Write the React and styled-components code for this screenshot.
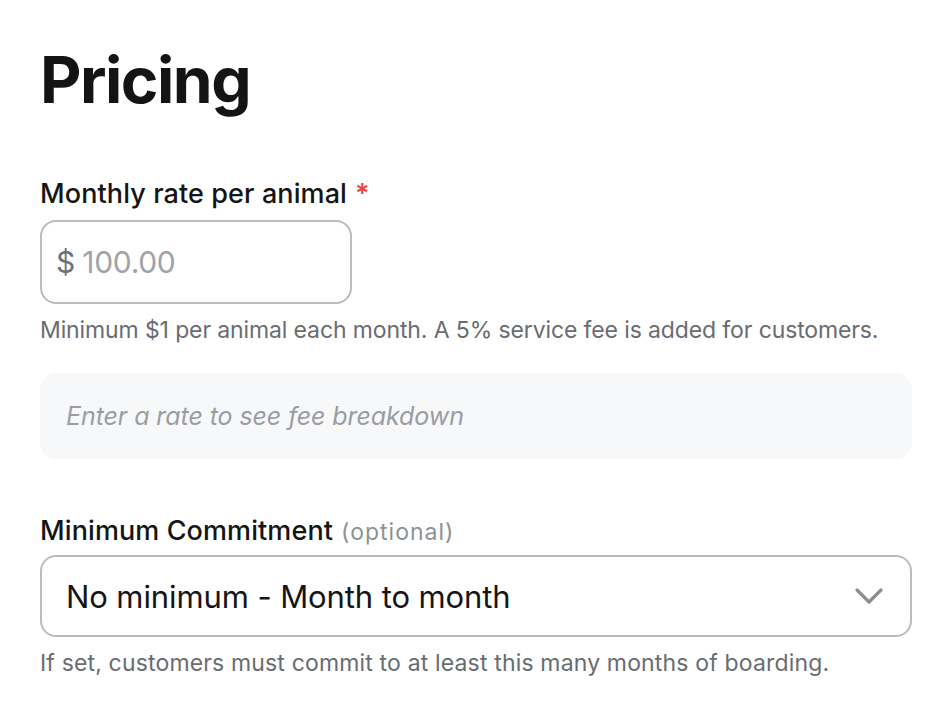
import React from "react";
import styled, { createGlobalStyle } from "styled-components";

const Global = createGlobalStyle`
  html, body { margin: 0; padding: 0; background: #ffffff; }
  body { font-family: Inter, "Noto Sans", sans-serif; color: #151515; }
  * { box-sizing: border-box; }
`;

const Page = styled.div`
  padding: 40px 40px 0 40px;
  display: flex;
  flex-direction: column;
`;

const Title = styled.h1`
  margin: 0;
  font-size: 64px;
  line-height: 80px;
  font-weight: 700;
  letter-spacing: -1.5px;
  color: #141414;
`;

const Field = styled.div`
  display: flex;
  flex-direction: column;
  margin-top: ${(p) => p.$top}px;
`;

const Label = styled.label`
  font-size: 27px;
  line-height: 36px;
  font-weight: 500;
  letter-spacing: 0.1px;
  color: #151515;
  display: flex;
  align-items: baseline;
  gap: 8px;
`;

const Required = styled.span`
  color: #ef4444;
  font-weight: 600;
`;

const Optional = styled.span`
  font-size: 23px;
  color: #8e9195;
  font-weight: 400;
  letter-spacing: 1px;
`;

const InputBox = styled.div`
  margin-top: 8px;
  width: 312px;
  height: 84px;
  border: 2px solid #b9bcc0;
  border-radius: 16px;
  display: flex;
  align-items: center;
  padding: 0 14px;
  font-size: 30px;
  gap: 7px;
`;

const Currency = styled.span`
  color: #6e7175;
`;

const Placeholder = styled.span`
  color: #a0a3a7;
  letter-spacing: -0.3px;
`;

const Help = styled.p`
  margin: 10px 0 0 0;
  font-size: 23px;
  line-height: 32px;
  color: #696c70;
  letter-spacing: ${(p) => p.$spacing ?? -0.12}px;
`;

const FeeBox = styled.div`
  margin-top: 27px;
  height: 86px;
  background: #f7f8fa;
  border-radius: 16px;
  display: flex;
  align-items: center;
  padding: 0 26px;
  font-size: 25px;
  font-style: italic;
  color: #9b9da0;
  letter-spacing: -0.08px;
`;

const Select = styled.div`
  margin-top: 5px;
  height: 82px;
  border: 2px solid #b9bcc0;
  border-radius: 16px;
  display: flex;
  align-items: center;
  justify-content: space-between;
  padding: 0 26px 0 24px;
  font-size: 31px;
  color: #151515;
  letter-spacing: -0.1px;
`;

const Chevron = () => (
  <svg width="30" height="20" viewBox="0 0 30 20" fill="none">
    <path d="M3 4 L15 16 L27 4" stroke="#8a8d91" strokeWidth="3.2" strokeLinecap="round" strokeLinejoin="round" />
  </svg>
);

export default function App() {
  return (
    <>
      <Global />
      <Page>
        <Title>Pricing</Title>
        <Field $top={56}>
          <Label>
            Monthly rate per animal <Required>*</Required>
          </Label>
          <InputBox>
            <Currency>$</Currency>
            <Placeholder>100.00</Placeholder>
          </InputBox>
          <Help>Minimum $1 per animal each month. A 5% service fee is added for customers.</Help>
          <FeeBox>Enter a rate to see fee breakdown</FeeBox>
        </Field>
        <Field $top={54}>
          <Label>
            Minimum Commitment <Optional>(optional)</Optional>
          </Label>
          <Select>
            <span>No minimum - Month to month</span>
            <Chevron />
          </Select>
          <Help $spacing={0.16}>If set, customers must commit to at least this many months of boarding.</Help>
        </Field>
      </Page>
    </>
  );
}
